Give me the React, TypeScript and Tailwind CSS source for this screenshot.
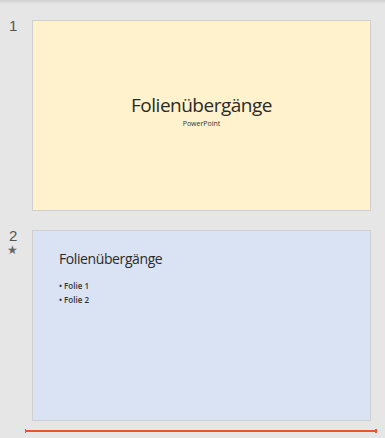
import React from "react";

export default function App() {
  return (
    <div className="relative w-[385px] h-[438px] bg-[#e6e6e6] overflow-hidden" style={{ fontFamily: "'Open Sans', 'Noto Sans', sans-serif" }}>
      <div className="absolute top-0 left-0 right-0 h-[4px] bg-gradient-to-b from-[#cfcfcf] to-[#e6e6e6]" />
      <div className="flex flex-col pt-[20px]">
        <div className="flex h-[191px]">
          <div className="w-[32px] pl-[9px] text-[15px] leading-none text-[#555]" style={{ fontFamily: "'Liberation Sans', sans-serif" }}>
            <div className="-mt-[2px]">1</div>
          </div>
          <div className="w-[339px] h-[191px] bg-[#fff2cc] border border-[#cfcfcf] flex flex-col items-center pt-[72px]">
            <div className="text-[19px] leading-[24px] text-[#2a2a2a] font-normal tracking-[-0.5px]">Folienübergänge</div>
            <div className="text-[7px] leading-[10px] text-[#333] mt-[2px]">PowerPoint</div>
          </div>
        </div>
        <div className="flex h-[191px] mt-[19px]">
          <div className="w-[32px] pl-[9px] text-[15px] leading-none text-[#555] flex flex-col" style={{ fontFamily: "'Liberation Sans', sans-serif" }}>
            <div className="-mt-[2px]">2</div>
            <div className="text-[12px] leading-none mt-[1px] -ml-[2px] text-[#666]" style={{ fontFamily: "'DejaVu Sans', sans-serif" }}>★</div>
          </div>
          <div className="w-[339px] h-[191px] bg-[#dae3f3] border border-[#cfcfcf] flex flex-col pl-[26px] pt-[18px]">
            <div className="text-[14px] leading-[20px] text-[#2a2a2a] font-normal tracking-[-0.4px]">Folienübergänge</div>
            <div className="mt-[11px] flex flex-col gap-[3px] text-[8px] leading-[11px] text-[#333] font-semibold">
              <div>• Folie 1</div>
              <div>• Folie 2</div>
            </div>
          </div>
        </div>
      </div>
      <div className="absolute left-[25px] w-[352px] top-[430px] h-[2px] bg-[#e8562a]">
        <div className="absolute left-0 top-[-1px] w-[1px] h-[4px] bg-[#e8562a]" />
        <div className="absolute right-0 top-[-1px] w-[2px] h-[4px] bg-[#e8562a]" />
      </div>
    </div>
  );
}
